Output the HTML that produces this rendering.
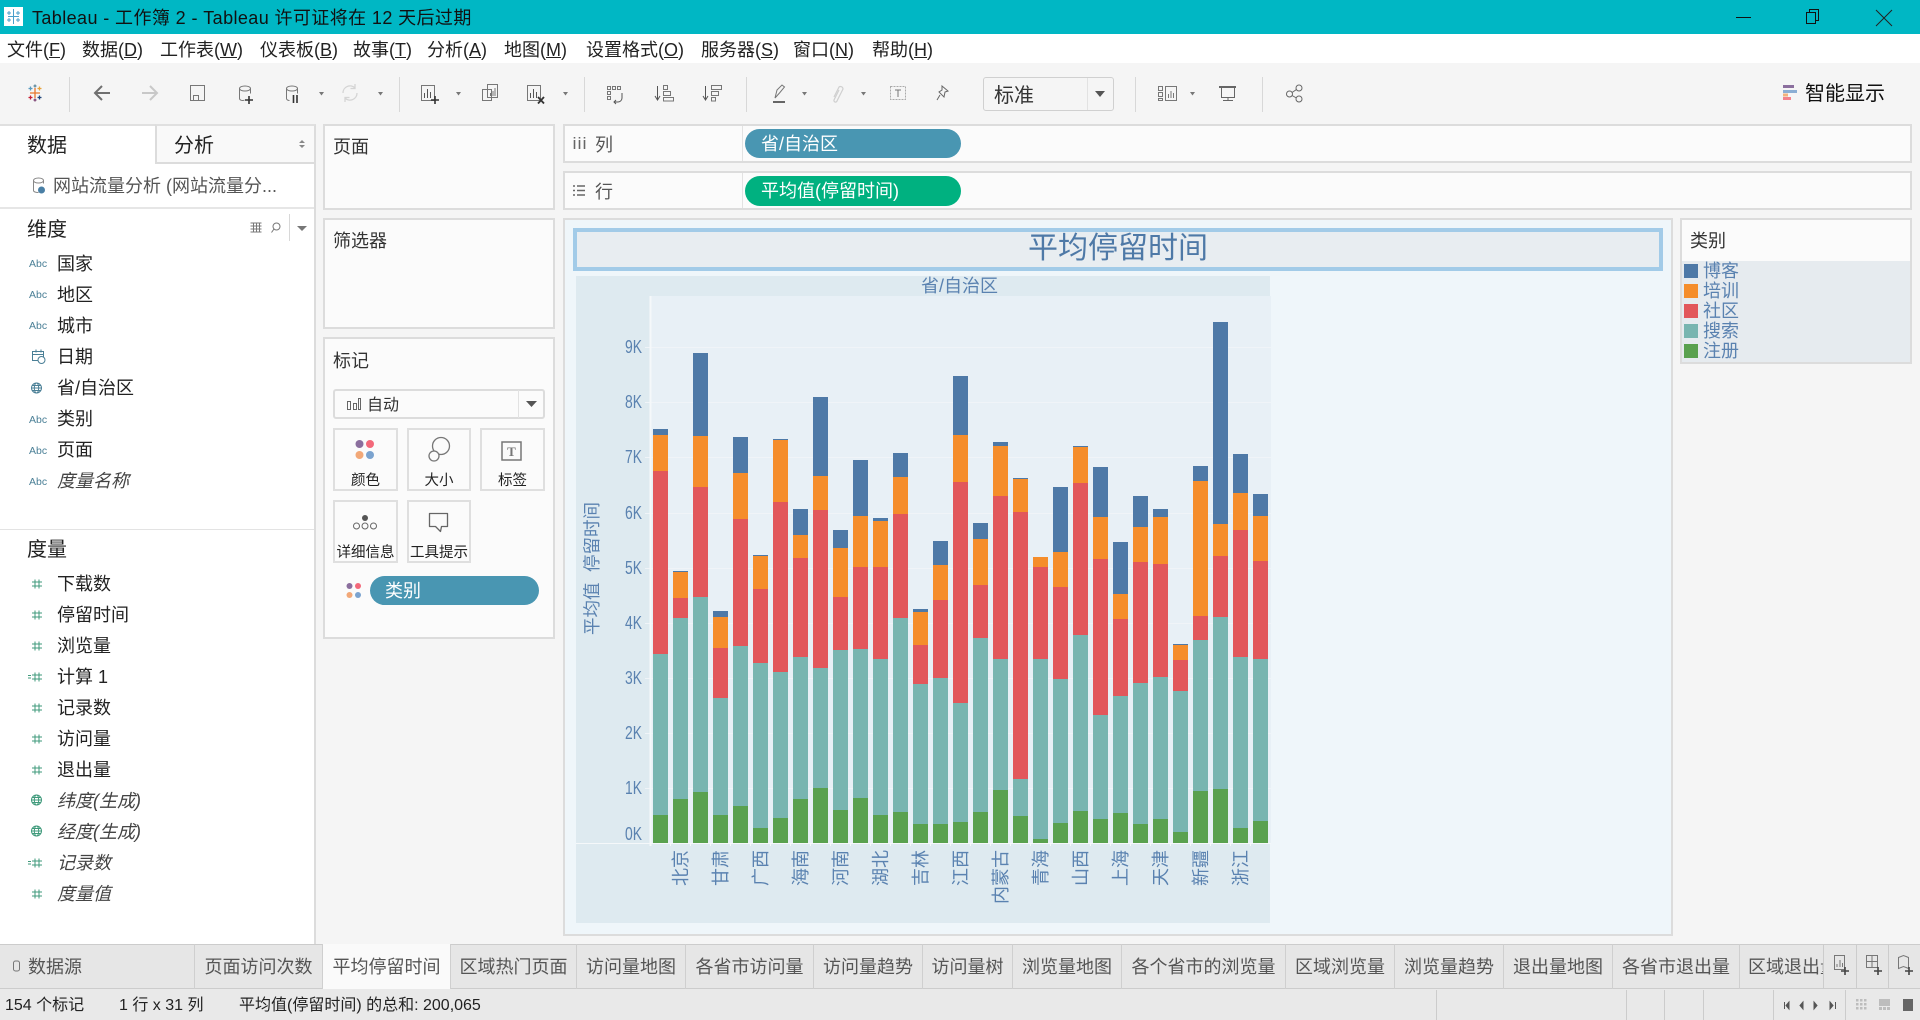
<!DOCTYPE html>
<html lang="zh"><head><meta charset="utf-8"><title>Tableau</title>
<style>
html,body{margin:0;padding:0;width:1920px;height:1020px;overflow:hidden;background:#f5f5f5}
body{position:relative;font-family:"Liberation Sans","Noto Sans CJK SC",sans-serif;font-size:18px;color:#222}
.t{position:absolute;white-space:nowrap;line-height:24px;height:24px}
.b{position:absolute;box-sizing:border-box}
.box{position:absolute;box-sizing:border-box;background:#fbfbfb;border:2px solid #dcdcdc}
.i{font-style:italic;color:#444}
.g{color:#555}
.btn{position:absolute;box-sizing:border-box;background:#fbfbfb;border:2px solid #dfdfdf}
.lab{position:absolute;font-size:14.5px;line-height:20px;white-space:nowrap;text-align:center;color:#222}
.tab{position:absolute;top:944px;height:45px;line-height:47px;box-sizing:border-box;border-right:1px solid #cfcfcf;text-align:center;color:#555;font-size:18px;white-space:nowrap;overflow:hidden}
.st{position:absolute;top:994px;line-height:24px;font-size:16px;white-space:nowrap;color:#222}
svg text{font-family:"Liberation Sans","Noto Sans CJK SC",sans-serif}
.bars path{stroke-width:15;fill:none}
.bb{stroke:#4e79a7}.bo{stroke:#f58d2b}.br{stroke:#e2575b}.bt{stroke:#78b5b0}.bg{stroke:#59a14f}
</style></head><body>

<!-- title bar -->
<div class="b" style="left:0;top:0;width:1920px;height:34px;background:#00b7c4"></div>
<div class="b" style="left:4px;top:7px;width:19px;height:19px;background:#fff"></div>
<div class="t" style="left:32px;top:6px;color:#111;letter-spacing:.4px">Tableau - 工作簿 2 - Tableau 许可证将在 12 天后过期</div>

<!-- menu -->
<div class="b" style="left:0;top:34px;width:1920px;height:29px;background:#fff"></div>
<div class="t" style="left:7px;top:38px">文件(<u>F</u>)</div>
<div class="t" style="left:82px;top:38px">数据(<u>D</u>)</div>
<div class="t" style="left:160px;top:38px">工作表(<u>W</u>)</div>
<div class="t" style="left:260px;top:38px">仪表板(<u>B</u>)</div>
<div class="t" style="left:353px;top:38px">故事(<u>T</u>)</div>
<div class="t" style="left:427px;top:38px">分析(<u>A</u>)</div>
<div class="t" style="left:504px;top:38px">地图(<u>M</u>)</div>
<div class="t" style="left:586px;top:38px">设置格式(<u>O</u>)</div>
<div class="t" style="left:701px;top:38px">服务器(<u>S</u>)</div>
<div class="t" style="left:793px;top:38px">窗口(<u>N</u>)</div>
<div class="t" style="left:872px;top:38px">帮助(<u>H</u>)</div>

<!-- toolbar -->
<div class="b" style="left:69px;top:77px;width:1px;height:35px;background:#d8d8d8"></div>
<div class="b" style="left:399px;top:77px;width:1px;height:35px;background:#d8d8d8"></div>
<div class="b" style="left:584px;top:77px;width:1px;height:35px;background:#d8d8d8"></div>
<div class="b" style="left:746px;top:77px;width:1px;height:35px;background:#d8d8d8"></div>
<div class="b" style="left:1135px;top:77px;width:1px;height:35px;background:#d8d8d8"></div>
<div class="b" style="left:1262px;top:77px;width:1px;height:35px;background:#d8d8d8"></div>
<div class="b" style="left:983px;top:77px;width:131px;height:34px;background:#f5f5f5;border:1px solid #d0d0d0;border-radius:3px"></div>
<div class="b" style="left:1087px;top:78px;width:1px;height:32px;background:#e2e2e2"></div>
<div class="t" style="left:994px;top:84px;font-size:20px;color:#333">标准</div>
<div class="t" style="left:1805px;top:82px;font-size:20px;color:#111">智能显示</div>

<!-- left data panel -->
<div class="b" style="left:0;top:124px;width:316px;height:820px;background:#fff;border-top:2px solid #e0e0e0;border-right:2px solid #dcdcdc"></div>
<div class="b" style="left:155px;top:124px;width:159px;height:40px;background:#f9f9f9;border-left:2px solid #dcdcdc;border-bottom:2px solid #dcdcdc;border-top:2px solid #e0e0e0"></div>
<div class="t" style="left:27px;top:134px;font-size:20px">数据</div>
<div class="t" style="left:174px;top:134px;font-size:20px">分析</div>
<div class="t g" style="left:53px;top:174px">网站流量分析 (网站流量分...</div>
<div class="b" style="left:0;top:207px;width:314px;height:2px;background:#e6e6e6"></div>
<div class="t" style="left:27px;top:218px;font-size:20px">维度</div>
<div class="b" style="left:289px;top:214px;width:1px;height:27px;background:#d8d8d8"></div>
<div class="t" style="left:57px;top:252px">国家</div>
<div class="t" style="left:57px;top:283px">地区</div>
<div class="t" style="left:57px;top:314px">城市</div>
<div class="t" style="left:57px;top:345px">日期</div>
<div class="t" style="left:57px;top:376px">省/自治区</div>
<div class="t" style="left:57px;top:407px">类别</div>
<div class="t" style="left:57px;top:438px">页面</div>
<div class="t i" style="left:57px;top:469px">度量名称</div>
<div class="b" style="left:0;top:529px;width:314px;height:1px;background:#e3e3e3"></div>
<div class="t" style="left:27px;top:538px;font-size:20px">度量</div>
<div class="t" style="left:57px;top:572px">下载数</div>
<div class="t" style="left:57px;top:603px">停留时间</div>
<div class="t" style="left:57px;top:634px">浏览量</div>
<div class="t" style="left:57px;top:665px">计算 1</div>
<div class="t" style="left:57px;top:696px">记录数</div>
<div class="t" style="left:57px;top:727px">访问量</div>
<div class="t" style="left:57px;top:758px">退出量</div>
<div class="t i" style="left:57px;top:789px">纬度(生成)</div>
<div class="t i" style="left:57px;top:820px">经度(生成)</div>
<div class="t i" style="left:57px;top:851px">记录数</div>
<div class="t i" style="left:57px;top:882px">度量值</div>

<!-- cards -->
<div class="box" style="left:323px;top:124px;width:232px;height:86px"></div>
<div class="t" style="left:333px;top:135px;color:#333">页面</div>
<div class="box" style="left:323px;top:218px;width:232px;height:111px"></div>
<div class="t" style="left:333px;top:229px;color:#333">筛选器</div>
<div class="box" style="left:323px;top:337px;width:232px;height:302px"></div>
<div class="t" style="left:333px;top:349px;color:#333">标记</div>
<div class="b" style="left:333px;top:389px;width:212px;height:30px;background:#fbfbfb;border:2px solid #dcdcdc;border-radius:3px"></div>
<div class="b" style="left:518px;top:390px;width:1px;height:28px;background:#e2e2e2"></div>
<div class="t" style="left:367px;top:392px;font-size:16px;line-height:27px;color:#333">自动</div>

<div class="btn" style="left:333px;top:428px;width:65px;height:63px"></div>
<div class="btn" style="left:407px;top:428px;width:64px;height:63px"></div>
<div class="btn" style="left:480px;top:428px;width:65px;height:63px"></div>
<div class="btn" style="left:333px;top:500px;width:65px;height:63px"></div>
<div class="btn" style="left:407px;top:500px;width:64px;height:63px"></div>
<div class="lab" style="left:333px;top:471px;width:65px">颜色</div>
<div class="lab" style="left:407px;top:471px;width:64px">大小</div>
<div class="lab" style="left:480px;top:471px;width:65px">标签</div>
<div class="lab" style="left:333px;top:543px;width:65px">详细信息</div>
<div class="lab" style="left:407px;top:543px;width:64px">工具提示</div>
<div class="b" style="left:370px;top:576px;width:169px;height:29px;border-radius:15px;background:#4996b2"></div>
<div class="t" style="left:385px;top:579px;color:#fff">类别</div>

<!-- shelves -->
<div class="box" style="left:563px;top:124px;width:1349px;height:39px"></div>
<div class="box" style="left:563px;top:171px;width:1349px;height:39px"></div>
<div class="b" style="left:742px;top:126px;width:1px;height:35px;background:#e2e2e2"></div>
<div class="b" style="left:742px;top:173px;width:1px;height:35px;background:#e2e2e2"></div>
<div class="t g" style="left:595px;top:133px">列</div>
<div class="t g" style="left:595px;top:180px">行</div>
<div class="b" style="left:745px;top:129px;width:216px;height:29px;border-radius:15px;background:#4996b2"></div>
<div class="t" style="left:761px;top:132px;color:#fff">省/自治区</div>
<div class="b" style="left:745px;top:176px;width:216px;height:30px;border-radius:15px;background:#00b180"></div>
<div class="t" style="left:761px;top:179px;color:#fff">平均值(停留时间)</div>

<!-- sheet -->
<div class="b" style="left:563px;top:218px;width:1110px;height:718px;background:#eff6fa;border:2px solid #dcdcdc"></div>
<div class="b" style="left:573px;top:228px;width:1090px;height:43px;background:#e8edf1;border:4px solid #a2cbe8"></div>
<div class="t" style="left:573px;top:230px;width:1090px;height:38px;line-height:38px;text-align:center;font-size:30px;color:#4e79a7">平均停留时间</div>
<div class="b" style="left:576px;top:276px;width:694px;height:647px;background:#deeaf0"></div>
<div class="b" style="left:650px;top:296px;width:621px;height:547px;background:#e8f0f6"></div>
<div class="t" style="left:921px;top:274px;font-size:18px;color:#5a82b0">省/自治区</div>

<!-- legend -->
<div class="box" style="left:1680px;top:218px;width:232px;height:146px"></div>
<div class="b" style="left:1682px;top:261px;width:228px;height:101px;background:#e6ebef"></div>
<div class="t" style="left:1690px;top:229px;color:#333">类别</div>
<div class="b" style="left:1684px;top:264px;width:14px;height:14px;background:#4e79a7"></div>
<div class="b" style="left:1684px;top:284px;width:14px;height:14px;background:#f58d2b"></div>
<div class="b" style="left:1684px;top:304px;width:14px;height:14px;background:#e2575b"></div>
<div class="b" style="left:1684px;top:324px;width:14px;height:14px;background:#78b5b0"></div>
<div class="b" style="left:1684px;top:344px;width:14px;height:14px;background:#59a14f"></div>
<div class="t" style="left:1703px;top:259px;color:#5a82b0">博客</div>
<div class="t" style="left:1703px;top:279px;color:#5a82b0">培训</div>
<div class="t" style="left:1703px;top:299px;color:#5a82b0">社区</div>
<div class="t" style="left:1703px;top:319px;color:#5a82b0">搜索</div>
<div class="t" style="left:1703px;top:339px;color:#5a82b0">注册</div>

<!-- tabs -->
<div class="b" style="left:0;top:944px;width:1920px;height:45px;background:#e6e6e6;border-top:1px solid #ccc;border-bottom:1px solid #ccc"></div>
<div class="tab" style="left:0;width:195px;text-align:left;padding-left:28px">数据源</div>
<div class="tab" style="left:195px;width:128px">页面访问次数</div>
<div class="tab" style="left:323px;width:128px;background:#fafafa">平均停留时间</div>
<div class="tab" style="left:451px;width:126px">区域热门页面</div>
<div class="tab" style="left:577px;width:109px">访问量地图</div>
<div class="tab" style="left:686px;width:128px">各省市访问量</div>
<div class="tab" style="left:814px;width:109px">访问量趋势</div>
<div class="tab" style="left:923px;width:90px">访问量树</div>
<div class="tab" style="left:1013px;width:109px">浏览量地图</div>
<div class="tab" style="left:1122px;width:164px">各个省市的浏览量</div>
<div class="tab" style="left:1286px;width:109px">区域浏览量</div>
<div class="tab" style="left:1395px;width:109px">浏览量趋势</div>
<div class="tab" style="left:1504px;width:109px">退出量地图</div>
<div class="tab" style="left:1613px;width:127px">各省市退出量</div>
<div class="tab" style="left:1740px;width:85px;text-align:left;padding-left:8px;border-right:none">区域退出量</div>
<div class="b" style="left:1823px;top:945px;width:97px;height:43px;background:#e6e6e6;border-left:1px solid #ccc"></div>
<div class="b" style="left:1856px;top:945px;width:1px;height:43px;background:#ccc"></div>
<div class="b" style="left:1888px;top:945px;width:1px;height:43px;background:#ccc"></div>

<!-- status bar -->
<div class="b" style="left:0;top:989px;width:1920px;height:31px;background:#e9e9e9"></div>
<div class="st" style="left:5px">154 个标记</div>
<div class="st" style="left:119px">1 行 x 31 列</div>
<div class="st" style="left:239px">平均值(停留时间) 的总和: 200,065</div>
<div class="b" style="left:1436px;top:990px;width:1px;height:30px;background:#ccc"></div>
<div class="b" style="left:1626px;top:990px;width:1px;height:30px;background:#ccc"></div>
<div class="b" style="left:1664px;top:990px;width:1px;height:30px;background:#ccc"></div>
<div class="b" style="left:1703px;top:990px;width:1px;height:30px;background:#ccc"></div>
<div class="b" style="left:1773px;top:990px;width:1px;height:30px;background:#ccc"></div>
<div class="b" style="left:1845px;top:990px;width:1px;height:30px;background:#ccc"></div>

<!-- overlay: chart and icons -->
<svg width="1920" height="1020" viewBox="0 0 1920 1020" style="position:absolute;left:0;top:0;display:block">
<!-- gridlines -->
<path d="M645 788.500H1271M645 733.500H1271M645 678.500H1271M645 623.500H1271M645 568.500H1271M645 513.500H1271M645 457.500H1271M645 402.500H1271M645 347.500H1271" stroke="#f0f4f8" fill="none"/>
<path d="M650.500 296V846" stroke="#f5f8fa" stroke-width="2"/>
<path d="M576 843.500H1271" stroke="#f5f8fa"/>
<path d="M670.500 843v3M690.500 843v3M710.500 843v3M730.500 843v3M750.500 843v3M770.500 843v3M790.500 843v3M810.500 843v3M830.500 843v3M850.500 843v3M870.500 843v3M890.500 843v3M910.500 843v3M930.500 843v3M950.500 843v3M970.500 843v3M990.500 843v3M1010.500 843v3M1030.500 843v3M1050.500 843v3M1070.500 843v3M1090.500 843v3M1110.500 843v3M1130.500 843v3M1150.500 843v3M1170.500 843v3M1190.500 843v3M1210.500 843v3M1230.500 843v3M1250.500 843v3" stroke="#f5f8fa"/>

<g class="bars">
<path class="bb" d="M660.500 429V843"/><path class="bo" d="M660.500 435V843"/><path class="br" d="M660.500 471V843"/><path class="bt" d="M660.500 654V843"/><path class="bg" d="M660.500 815V843"/>
<path class="bb" d="M680.500 571V843"/><path class="bo" d="M680.500 572V843"/><path class="br" d="M680.500 598V843"/><path class="bt" d="M680.500 618V843"/><path class="bg" d="M680.500 799V843"/>
<path class="bb" d="M700.500 353V843"/><path class="bo" d="M700.500 436V843"/><path class="br" d="M700.500 487V843"/><path class="bt" d="M700.500 597V843"/><path class="bg" d="M700.500 792V843"/>
<path class="bb" d="M720.500 611V843"/><path class="bo" d="M720.500 617V843"/><path class="br" d="M720.500 648V843"/><path class="bt" d="M720.500 698V843"/><path class="bg" d="M720.500 815V843"/>
<path class="bb" d="M740.500 437V843"/><path class="bo" d="M740.500 473V843"/><path class="br" d="M740.500 519V843"/><path class="bt" d="M740.500 646V843"/><path class="bg" d="M740.500 806V843"/>
<path class="bb" d="M760.500 555V843"/><path class="bo" d="M760.500 556V843"/><path class="br" d="M760.500 589V843"/><path class="bt" d="M760.500 663V843"/><path class="bg" d="M760.500 828V843"/>
<path class="bb" d="M780.500 439V843"/><path class="bo" d="M780.500 440V843"/><path class="br" d="M780.500 502V843"/><path class="bt" d="M780.500 672V843"/><path class="bg" d="M780.500 818V843"/>
<path class="bb" d="M800.500 509V843"/><path class="bo" d="M800.500 535V843"/><path class="br" d="M800.500 558V843"/><path class="bt" d="M800.500 657V843"/><path class="bg" d="M800.500 799V843"/>
<path class="bb" d="M820.500 397V843"/><path class="bo" d="M820.500 476V843"/><path class="br" d="M820.500 510V843"/><path class="bt" d="M820.500 668V843"/><path class="bg" d="M820.500 788V843"/>
<path class="bb" d="M840.500 530V843"/><path class="bo" d="M840.500 548V843"/><path class="br" d="M840.500 597V843"/><path class="bt" d="M840.500 650V843"/><path class="bg" d="M840.500 810V843"/>
<path class="bb" d="M860.500 460V843"/><path class="bo" d="M860.500 516V843"/><path class="br" d="M860.500 567V843"/><path class="bt" d="M860.500 649V843"/><path class="bg" d="M860.500 798V843"/>
<path class="bb" d="M880.500 518V843"/><path class="bo" d="M880.500 521V843"/><path class="br" d="M880.500 567V843"/><path class="bt" d="M880.500 659V843"/><path class="bg" d="M880.500 815V843"/>
<path class="bb" d="M900.500 453V843"/><path class="bo" d="M900.500 477V843"/><path class="br" d="M900.500 514V843"/><path class="bt" d="M900.500 618V843"/><path class="bg" d="M900.500 812V843"/>
<path class="bb" d="M920.500 609V843"/><path class="bo" d="M920.500 612V843"/><path class="br" d="M920.500 645V843"/><path class="bt" d="M920.500 684V843"/><path class="bg" d="M920.500 824V843"/>
<path class="bb" d="M940.500 541V843"/><path class="bo" d="M940.500 565V843"/><path class="br" d="M940.500 600V843"/><path class="bt" d="M940.500 678V843"/><path class="bg" d="M940.500 824V843"/>
<path class="bb" d="M960.500 376V843"/><path class="bo" d="M960.500 435V843"/><path class="br" d="M960.500 482V843"/><path class="bt" d="M960.500 703V843"/><path class="bg" d="M960.500 822V843"/>
<path class="bb" d="M980.500 523V843"/><path class="bo" d="M980.500 539V843"/><path class="br" d="M980.500 585V843"/><path class="bt" d="M980.500 638V843"/><path class="bg" d="M980.500 812V843"/>
<path class="bb" d="M1000.500 442V843"/><path class="bo" d="M1000.500 446V843"/><path class="br" d="M1000.500 496V843"/><path class="bt" d="M1000.500 659V843"/><path class="bg" d="M1000.500 790V843"/>
<path class="bb" d="M1020.500 478V843"/><path class="bo" d="M1020.500 479V843"/><path class="br" d="M1020.500 512V843"/><path class="bt" d="M1020.500 779V843"/><path class="bg" d="M1020.500 816V843"/>
<path class="bo" d="M1040.500 557V843"/><path class="br" d="M1040.500 567V843"/><path class="bt" d="M1040.500 659V843"/><path class="bg" d="M1040.500 839V843"/>
<path class="bb" d="M1060.500 487V843"/><path class="bo" d="M1060.500 552V843"/><path class="br" d="M1060.500 587V843"/><path class="bt" d="M1060.500 679V843"/><path class="bg" d="M1060.500 823V843"/>
<path class="bb" d="M1080.500 446V843"/><path class="bo" d="M1080.500 447V843"/><path class="br" d="M1080.500 483V843"/><path class="bt" d="M1080.500 635V843"/><path class="bg" d="M1080.500 811V843"/>
<path class="bb" d="M1100.500 467V843"/><path class="bo" d="M1100.500 517V843"/><path class="br" d="M1100.500 559V843"/><path class="bt" d="M1100.500 715V843"/><path class="bg" d="M1100.500 819V843"/>
<path class="bb" d="M1120.500 542V843"/><path class="bo" d="M1120.500 594V843"/><path class="br" d="M1120.500 619V843"/><path class="bt" d="M1120.500 696V843"/><path class="bg" d="M1120.500 813V843"/>
<path class="bb" d="M1140.500 496V843"/><path class="bo" d="M1140.500 527V843"/><path class="br" d="M1140.500 562V843"/><path class="bt" d="M1140.500 683V843"/><path class="bg" d="M1140.500 824V843"/>
<path class="bb" d="M1160.500 509V843"/><path class="bo" d="M1160.500 517V843"/><path class="br" d="M1160.500 564V843"/><path class="bt" d="M1160.500 677V843"/><path class="bg" d="M1160.500 819V843"/>
<path class="bb" d="M1180.500 644V843"/><path class="bo" d="M1180.500 645V843"/><path class="br" d="M1180.500 660V843"/><path class="bt" d="M1180.500 691V843"/><path class="bg" d="M1180.500 832V843"/>
<path class="bb" d="M1200.500 466V843"/><path class="bo" d="M1200.500 481V843"/><path class="br" d="M1200.500 616V843"/><path class="bt" d="M1200.500 640V843"/><path class="bg" d="M1200.500 791V843"/>
<path class="bb" d="M1220.500 322V843"/><path class="bo" d="M1220.500 524V843"/><path class="br" d="M1220.500 556V843"/><path class="bt" d="M1220.500 617V843"/><path class="bg" d="M1220.500 789V843"/>
<path class="bb" d="M1240.500 454V843"/><path class="bo" d="M1240.500 493V843"/><path class="br" d="M1240.500 530V843"/><path class="bt" d="M1240.500 657V843"/><path class="bg" d="M1240.500 828V843"/>
<path class="bb" d="M1260.500 494V843"/><path class="bo" d="M1260.500 516V843"/><path class="br" d="M1260.500 561V843"/><path class="bt" d="M1260.500 659V843"/><path class="bg" d="M1260.500 821V843"/>
</g>

<!-- axis labels -->
<g font-size="18" fill="#5a82b0">
<text x="625" y="353" textLength="17" lengthAdjust="spacingAndGlyphs">9K</text><text x="625" y="408" textLength="17" lengthAdjust="spacingAndGlyphs">8K</text><text x="625" y="463" textLength="17" lengthAdjust="spacingAndGlyphs">7K</text><text x="625" y="519" textLength="17" lengthAdjust="spacingAndGlyphs">6K</text><text x="625" y="574" textLength="17" lengthAdjust="spacingAndGlyphs">5K</text><text x="625" y="629" textLength="17" lengthAdjust="spacingAndGlyphs">4K</text><text x="625" y="684" textLength="17" lengthAdjust="spacingAndGlyphs">3K</text><text x="625" y="739" textLength="17" lengthAdjust="spacingAndGlyphs">2K</text><text x="625" y="794" textLength="17" lengthAdjust="spacingAndGlyphs">1K</text><text x="625" y="840" textLength="17" lengthAdjust="spacingAndGlyphs">0K</text>
</g>
<g font-size="17.500" fill="#5a82b0">
<text transform="translate(598,635) rotate(-90)">平均值</text>
<text transform="translate(598,572) rotate(-90)">停留时间</text>
</g>
<g font-size="18" fill="#5a82b0" text-anchor="end">
<text transform="translate(687,850) rotate(-90)">北京</text>
<text transform="translate(727,850) rotate(-90)">甘肃</text>
<text transform="translate(767,850) rotate(-90)">广西</text>
<text transform="translate(807,850) rotate(-90)">海南</text>
<text transform="translate(847,850) rotate(-90)">河南</text>
<text transform="translate(887,850) rotate(-90)">湖北</text>
<text transform="translate(927,850) rotate(-90)">吉林</text>
<text transform="translate(967,850) rotate(-90)">江西</text>
<text transform="translate(1007,850) rotate(-90)">内蒙古</text>
<text transform="translate(1047,850) rotate(-90)">青海</text>
<text transform="translate(1087,850) rotate(-90)">山西</text>
<text transform="translate(1127,850) rotate(-90)">上海</text>
<text transform="translate(1167,850) rotate(-90)">天津</text>
<text transform="translate(1207,850) rotate(-90)">新疆</text>
<text transform="translate(1247,850) rotate(-90)">浙江</text>
</g>

<!-- title bar icon -->
<g stroke="#4a9fcb" stroke-width="1" fill="none"><path d="M13.500 9v15M8 16.500H19M9 11v4M7 13h4M18 11v4M16 13h4M9 18v4M7 20h4M18 18v4M16 20h4"/></g>
<!-- window controls -->
<path d="M1736 17.500H1751" stroke="#111" fill="none"/>
<path d="M1806.500 12.500h9v11h-9zM1809.500 12.500v-3h9v11h-3" stroke="#111" fill="none"/>
<path d="M1876 10L1892 26M1892 10L1876 26" stroke="#222" fill="none"/>

<!-- toolbar logo -->
<g stroke-width="1.300" fill="none">
<path d="M35 88v10M30 93h10" stroke="#e8762b"/>
<path d="M30.500 86.500v4M28.500 88.500h4" stroke="#5b9bbf"/>
<path d="M39.500 86.500v4M37.500 88.500h4" stroke="#e8a23b"/>
<path d="M30.500 95.500v4M28.500 97.500h4" stroke="#c72035"/>
<path d="M39.500 95.500v4M37.500 97.500h4" stroke="#1f447a"/>
<path d="M35 84.500v3M33.500 86h3" stroke="#59879b"/>
<path d="M35 98.500v3M33.500 100h3" stroke="#7b3f71"/>
</g>
<!-- back / forward -->
<path d="M110 93H95M102 86l-7 7 7 7" stroke="#707070" stroke-width="2" fill="none"/>
<path d="M142 93H157M150 86l7 7-7 7" stroke="#c8c8c8" stroke-width="2" fill="none"/>
<!-- save -->
<path d="M190.500 85.500h14v15h-14z" stroke="#777" fill="none"/><path d="M193.500 95.500h5v5h-5z" stroke="#777" fill="none"/>
<!-- add data source -->
<path d="M239.500 88.500v10a3 2 0 0 0 5 1.500M250.500 88.500v5M239.500 88.500a5.500 2.500 0 0 1 11 0a5.500 2.500 0 0 1-11 0" stroke="#777" fill="none"/>
<path d="M249 96v8M245 100h8" stroke="#333" stroke-width="1.600" fill="none"/>
<!-- pause data source -->
<path d="M286.500 88.500v10a3 2 0 0 0 3 2M297.500 88.500v5M286.500 88.500a5.500 2.500 0 0 1 11 0a5.500 2.500 0 0 1-11 0" stroke="#777" fill="none"/>
<path d="M293.500 95v8M297 95v8" stroke="#333" stroke-width="1.600" fill="none"/>
<path d="M319 92h5l-2.500 3.500zM378 92h5l-2.500 3.500zM456 92h5l-2.500 3.500zM563 92h5l-2.500 3.500zM802 92h5l-2.500 3.500zM861 92h5l-2.500 3.500z" fill="#777"/>
<path d="M1190 92h5l-2.500 3.500z" fill="#777"/>
<!-- refresh -->
<path d="M343 93a7 7 0 0 1 12-5M357 93a7 7 0 0 1-12 5M355 84v4.500h-4.500M345 102v-4.500h4.500" stroke="#d4d4d4" stroke-width="1.300" fill="none"/>
<!-- new sheet -->
<path d="M421.500 85.500h13v15h-13z" stroke="#777" fill="none"/>
<path d="M424.500 98v-5M427.500 98v-9M430.500 98v-6" stroke="#555" fill="none"/>
<path d="M435 96v8M431 100h8" stroke="#333" stroke-width="1.600" fill="none"/>
<!-- duplicate -->
<path d="M487.500 84.500h10v13h-10zM482.500 89.500h9v11h-9z" stroke="#777" fill="#f5f5f5"/>
<path d="M490.500 93v3M493 91v5M495 88v8" stroke="#777" fill="none"/>
<!-- clear -->
<path d="M527.500 85.500h13v15h-13z" stroke="#777" fill="none"/>
<path d="M530.500 98v-5M533.500 98v-9M536.500 98v-6" stroke="#555" fill="none"/>
<path d="M538 97l6 6.500M544 97l-6 6.500" stroke="#333" stroke-width="1.800" fill="none"/>
<!-- swap -->
<path d="M607.500 86.500h3v3h-3zM612.500 86.500h3v3h-3zM617.500 86.500h3v3h-3zM607.500 91.500h3v3h-3zM607.500 96.500h3v3h-3z" stroke="#777" fill="none"/>
<path d="M622 93v5a4 4 0 0 1-4 4h-4M616 100l-2 2 2 2" stroke="#555" fill="none"/>
<!-- sort -->
<path d="M657.500 86v13M655 96l2.500 4 2.500-4" stroke="#555" fill="none"/>
<path d="M663.500 85.500h4v4h-4zM663.500 91.500h7v4h-7zM663.500 97.500h10v3.500h-10z" stroke="#777" fill="none"/>
<path d="M705.500 86v13M703 96l2.500 4 2.500-4" stroke="#555" fill="none"/>
<path d="M711.500 85.500h10v4h-10zM711.500 91.500h7v4h-7zM711.500 97.500h4v3.500h-4z" stroke="#777" fill="none"/>
<!-- highlight -->
<path d="M775 98l2-8 5-5 2.500 2-5 6z" stroke="#777" fill="none"/><path d="M773 101h12v2h-12z" fill="#666"/>
<!-- clip -->
<path d="M834 97l5-10a2.500 2.500 0 0 1 4 2l-6 12a1.500 1.500 0 0 1-3-1l5-10" stroke="#cfcfcf" fill="none" stroke-width="1.200"/>
<!-- T -->
<path d="M890.500 86.500h15v13h-15z" stroke="#aaa" stroke-dasharray="2 1" fill="none"/><path d="M895 90h6M898 90v7" stroke="#777" fill="none"/>
<!-- pin -->
<path d="M942 86l6 5-3 1-1 5-5-5 3-2zM940 95l-3 5" stroke="#666" fill="none"/>
<!-- dropdown arrow -->
<path d="M1095 91h10l-5 6z" fill="#555"/>
<!-- show-me small -->
<path d="M1158.500 86.500h4v4h-4zM1158.500 92.500h4v4h-4zM1158.500 98.500h4v2h-4z" stroke="#777" fill="none"/>
<path d="M1165.500 86.500h11v14h-11z" stroke="#777" fill="none"/><path d="M1168.500 98v-4M1171 98v-7M1173.500 98v-5" stroke="#777" fill="none"/>
<!-- presenter -->
<path d="M1219 86h17v2h-17z" fill="#666"/><path d="M1221.500 88v9.500h13V88M1228 98v3M1223 100.500h10" stroke="#666" fill="none"/>
<!-- share -->
<circle cx="1289.500" cy="94" r="3" stroke="#666" fill="none"/><circle cx="1299" cy="88" r="3" stroke="#666" fill="none"/><circle cx="1299" cy="99" r="3" stroke="#666" fill="none"/><path d="M1292 92.500l4.500-3M1292 95.500l4.500 2.500" stroke="#666" fill="none"/>
<!-- show me -->
<path d="M1783 85h11v3h-11z" fill="#8b6f9e"/><path d="M1783 90h14v3h-14z" fill="#8baed4"/><path d="M1783 93.500h5v3h-5z" fill="#f2b27c"/><path d="M1783 97h8v3h-8z" fill="#f3828c"/>

<!-- left panel icons -->
<path d="M302 140l-3 3h6zM302 148l-3-3h6z" fill="#888"/>
<path d="M33.500 180.500v10a4.500 2 0 0 0 5 2M43.500 180.500v3M33.500 180.500a5 2.500 0 0 1 10 0a5 2.500 0 0 1-10 0" stroke="#888" fill="none"/>
<circle cx="41.500" cy="190" r="3.500" fill="#4a7fa5"/>
<path d="M250.500 223h11M250.500 226h11M250.500 229h11M250.500 232h11M253.500 223v9M256.500 223v9M259.500 223v9" stroke="#777" fill="none" stroke-width="1"/>
<circle cx="276.500" cy="226.500" r="3.500" stroke="#777" fill="none"/><path d="M274 229l-2.500 3.500" stroke="#777" fill="none"/>
<path d="M297 226h10l-5 5z" fill="#777"/>
<g font-size="10.500" fill="#4a7f96">
<text x="29" y="267">Abc</text><text x="29" y="298">Abc</text><text x="29" y="329">Abc</text><text x="29" y="423">Abc</text><text x="29" y="454">Abc</text><text x="29" y="485">Abc</text>
</g>
<path d="M32.500 351.500h11v9h-11zM32.500 354.500h11M36 349.500v3M41 349.500v3" stroke="#4a7f96" fill="none"/><circle cx="41.500" cy="360" r="3.500" stroke="#4a7f96" fill="#fff"/>
<g stroke="#4a7f96" fill="none"><circle cx="36.500" cy="388" r="5"/><ellipse cx="36.500" cy="388" rx="2.200" ry="5"/><path d="M31.500 388h10M32.500 385.500h8M32.500 390.500h8"/></g>
<g stroke="#3f9a7b" fill="none" stroke-width="1">
<path d="M35 579.500v9M39 579.500v9M32 582h10M32 586h10"/>
<path d="M35 610.500v9M39 610.500v9M32 613h10M32 617h10"/>
<path d="M35 641.500v9M39 641.500v9M32 644h10M32 648h10"/>
<path d="M35 672.500v9M39 672.500v9M32 675h10M32 679h10M28 675.500h3M28 678h3"/>
<path d="M35 703.500v9M39 703.500v9M32 706h10M32 710h10"/>
<path d="M35 734.500v9M39 734.500v9M32 737h10M32 741h10"/>
<path d="M35 765.500v9M39 765.500v9M32 768h10M32 772h10"/>
<path d="M35 858.500v9M39 858.500v9M32 861h10M32 865h10M28 861.500h3M28 864h3"/>
<path d="M35 889.500v9M39 889.500v9M32 892h10M32 896h10"/>
<circle cx="36.500" cy="800" r="5"/><ellipse cx="36.500" cy="800" rx="2.200" ry="5"/><path d="M31.500 800h10M32.500 797.500h8M32.500 802.500h8"/>
<circle cx="36.500" cy="831" r="5"/><ellipse cx="36.500" cy="831" rx="2.200" ry="5"/><path d="M31.500 831h10M32.500 828.500h8M32.500 833.500h8"/>
</g>

<!-- marks icons -->
<path d="M347.500 401.500h3v8h-3zM353.500 403.500h3v6h-3zM358.500 398.500h2v11h-2z" stroke="#666" fill="none"/>
<path d="M526 401h11l-5.500 6z" fill="#555"/>
<circle cx="359.500" cy="444" r="4" fill="#8b6f9e"/><circle cx="370" cy="444" r="4" fill="#f3697a"/><circle cx="359.500" cy="455" r="4" fill="#f2a878"/><circle cx="370" cy="455" r="4" fill="#7ba3cf"/>
<circle cx="441" cy="446" r="8.500" stroke="#777" stroke-width="1.300" fill="none"/><circle cx="434" cy="456" r="5" stroke="#777" stroke-width="1.300" fill="#fbfbfb"/>
<path d="M502 442h19v18h-19z" stroke="#777" stroke-width="1.500" fill="none"/><text x="511.500" y="456" font-size="13" font-weight="bold" fill="#777" text-anchor="middle" style="font-family:'Liberation Serif',serif">T</text>
<circle cx="365" cy="518" r="3" fill="#555"/><circle cx="356.500" cy="526" r="3" stroke="#666" fill="none"/><circle cx="365" cy="526" r="3" stroke="#666" fill="none"/><circle cx="373.500" cy="526" r="3" stroke="#666" fill="none"/>
<path d="M429.500 513.500h18v13h-6l-1 5-5-5h-6z" stroke="#666" stroke-width="1.300" fill="none" stroke-linejoin="round"/>
<circle cx="349.500" cy="586" r="3" fill="#8b6f9e"/><circle cx="358" cy="586" r="3" fill="#f3697a"/><circle cx="349.500" cy="595" r="3" fill="#f2a878"/><circle cx="358" cy="595" r="3" fill="#7ba3cf"/>

<!-- shelf icons -->
<path d="M574.500 140v9M579.500 140v9M584.500 140v9M574.500 137v1.500M579.500 137v1.500M584.500 137v1.500" stroke="#666" stroke-width="1.600" fill="none"/>
<path d="M577 186h8M577 190.500h8M577 195h8M573 186h2M573 190.500h2M573 195h2" stroke="#666" stroke-width="1.500" fill="none"/>

<!-- tab/status icons -->
<rect x="13.500" y="961" width="6" height="10" rx="2" stroke="#777" fill="none"/>
<path d="M1834.500 955.500h10v14h-10z" stroke="#777" fill="none"/><path d="M1837 967v-3M1840 967v-7M1842.500 967v-4" stroke="#777" fill="none"/><path d="M1845 967v8M1841 971h8" stroke="#444" stroke-width="1.600" fill="none"/>
<path d="M1866.500 955.500h11v12h-11zM1866.500 961.500h11M1872 955.500v12" stroke="#777" fill="none"/><path d="M1878 967v8M1874 971h8" stroke="#444" stroke-width="1.600" fill="none"/>
<path d="M1898.500 957.500l5-2 5 2v11l-5-2-5 2z" stroke="#777" fill="none"/><path d="M1909 967v8M1905 971h8" stroke="#444" stroke-width="1.600" fill="none"/>
<path d="M1784.500 1002v7M1789 1002l-3 3.500 3 3.500zM1803 1002l-3 3.500 3 3.500zM1814 1002l3 3.500-3 3.500zM1830 1002l3 3.500-3 3.500zM1835.500 1002v7" stroke="#555" fill="#555"/>
<g fill="#bdbdbd"><rect x="1856" y="999" width="2.500" height="2.500"/><rect x="1860" y="999" width="2.500" height="2.500"/><rect x="1864" y="999" width="2.500" height="2.500"/><rect x="1856" y="1003" width="2.500" height="2.500"/><rect x="1860" y="1003" width="2.500" height="2.500"/><rect x="1864" y="1003" width="2.500" height="2.500"/><rect x="1856" y="1007" width="2.500" height="2.500"/><rect x="1860" y="1007" width="2.500" height="2.500"/><rect x="1864" y="1007" width="2.500" height="2.500"/>
<rect x="1879" y="999" width="11" height="7"/><rect x="1879" y="1007" width="3" height="3"/><rect x="1883" y="1007" width="3" height="3"/><rect x="1887" y="1007" width="3" height="3"/></g>
<rect x="1903" y="999" width="10" height="12" fill="#666"/>
</svg>
</body></html>
